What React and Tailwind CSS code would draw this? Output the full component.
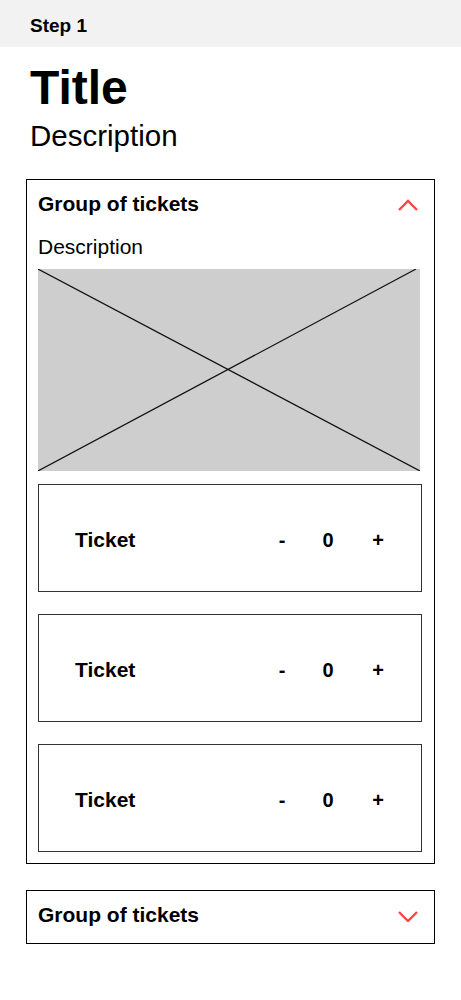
import React, { useState } from 'react';

const font = { fontFamily: '"Liberation Sans", Arial, sans-serif' };

const Chevron = ({ up }) => (
  <svg width="20" height="14" viewBox="0 0 20 14" fill="none" className="shrink-0">
    <polyline
      points={up ? '1,13 10,4 19,13' : '1,4 10,13 19,4'}
      stroke="#ff4444"
      strokeWidth="2.4"
    />
  </svg>
);

const Placeholder = () => (
  <div className="relative h-[202px] w-[382px] bg-[#cecece]">
    <svg className="absolute inset-0 h-full w-full" viewBox="0 0 382 202" preserveAspectRatio="none">
      <line x1="0" y1="0" x2="382" y2="202" stroke="#111" strokeWidth="1.2" />
      <line x1="378" y1="0" x2="0" y2="202" stroke="#111" strokeWidth="1.2" />
    </svg>
  </div>
);

const TicketRow = ({ label, count, onMinus, onPlus }) => (
  <div className="flex h-[108px] w-[384px] items-center border border-[#333] pl-[36px] pr-[31px] pt-[3px]">
    <span className="flex-1 text-[21px] font-bold">{label}</span>
    <div className="flex items-center text-[20px] font-bold">
      <button className="mr-[22px] w-6 text-center" onClick={onMinus}>-</button>
      <span className="mr-[26px] w-6 text-center">{count}</span>
      <button className="w-6 text-center" onClick={onPlus}>+</button>
    </div>
  </div>
);

const Group = ({ open, onToggle, children }) => (
  <div className={`border border-black px-[11px] pt-[9px] ${open ? 'pb-[11px]' : 'pb-[13px]'}`}>
    <button className="flex h-[30px] w-full items-center justify-between pr-[5px]" onClick={onToggle}>
      <span className="text-[21px] font-bold leading-6">Group of tickets</span>
      <Chevron up={open} />
    </button>
    {open && children}
  </div>
);

export default function App() {
  const [counts, setCounts] = useState([0, 0, 0]);
  const [openGroups, setOpenGroups] = useState([true, false]);

  const change = (i, d) =>
    setCounts(c => c.map((v, j) => (j === i ? Math.max(0, v + d) : v)));
  const toggle = i => setOpenGroups(g => g.map((v, j) => (j === i ? !v : v)));

  return (
    <div className="min-h-screen bg-white text-black" style={font}>
      <div className="flex h-[47px] items-center bg-[#f2f2f2] px-[30px] pt-[6px]">
        <span className="text-[19px] font-bold">Step 1</span>
      </div>

      <div className="px-[26px]">
        <div className="px-[4px] pt-[17px]">
          <h1 className="text-[48px] font-bold leading-[48px]">Title</h1>
          <p className="mt-[6px] text-[29.5px] leading-[35px]">Description</p>
        </div>

        <div className="mt-[26px]">
          <Group open={openGroups[0]} onToggle={() => toggle(0)}>
            <p className="mt-[16px] text-[21px] leading-6">Description</p>
            <div className="mt-[10px]">
              <Placeholder />
            </div>
            <div className="mt-[13px] flex flex-col gap-[22px]">
              {counts.map((c, i) => (
                <TicketRow
                  key={i}
                  label="Ticket"
                  count={c}
                  onMinus={() => change(i, -1)}
                  onPlus={() => change(i, 1)}
                />
              ))}
            </div>
          </Group>
        </div>

        <div className="mt-[26px]">
          <Group open={openGroups[1]} onToggle={() => toggle(1)} />
        </div>
      </div>
    </div>
  );
}
